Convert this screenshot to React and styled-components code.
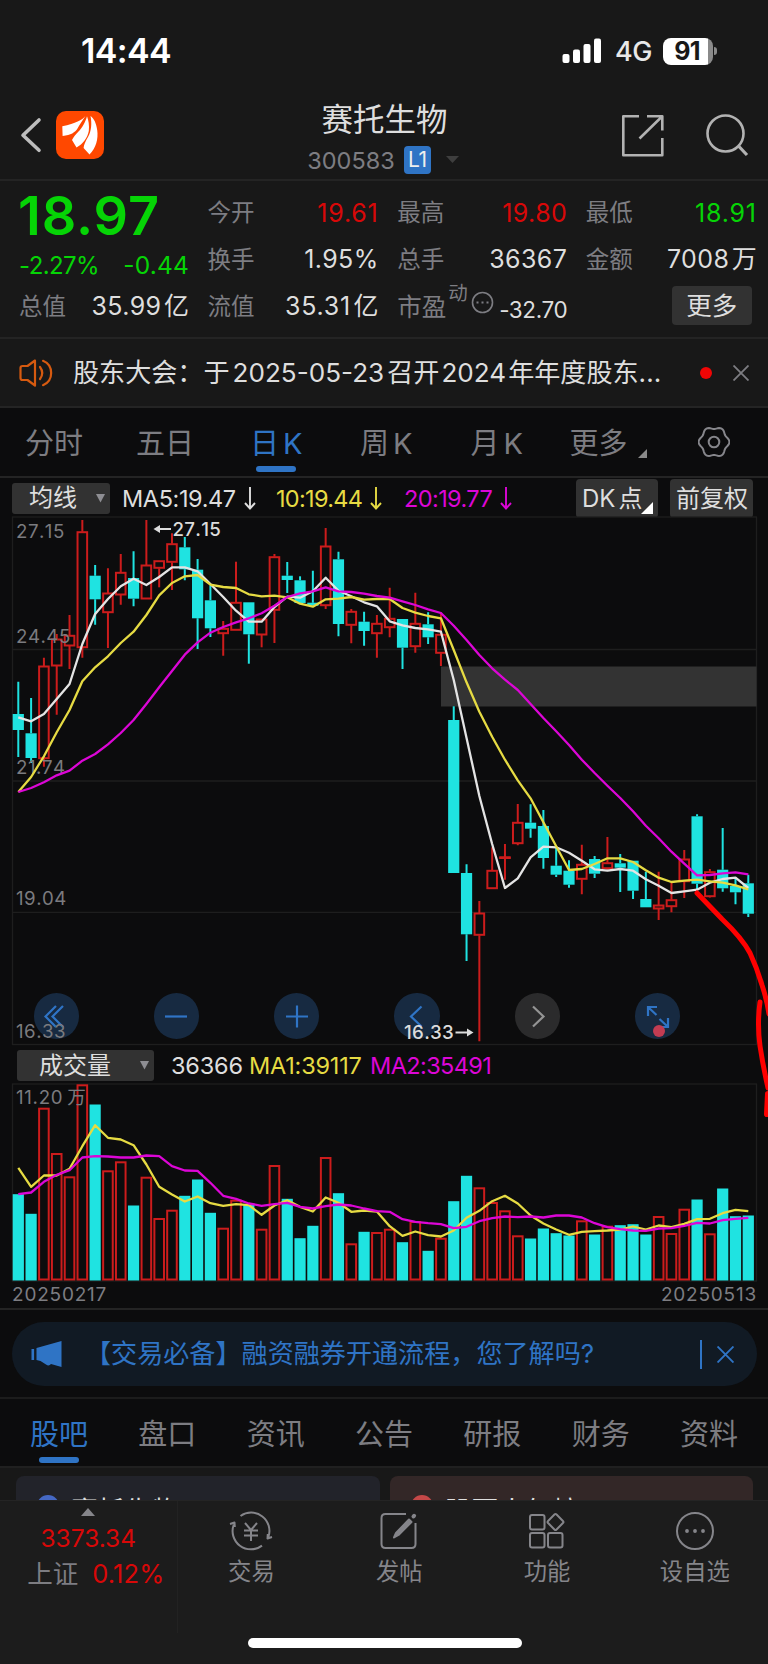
import React from 'react'
import styled, { createGlobalStyle, ThemeProvider } from 'styled-components'


const theme = {
    panel: '#181818',
    dark: '#0c0c0d',
    footer: '#1c1c1c',
    border: '#242424',
    grid: '#1e1e1e',
    button: '#323232',
    text: '#dedede',
    muted: '#7d7d82',
    blue: '#2f74c5',
    red: '#d80808',
    green: '#06d406',
    candleRed: '#cc1c1c',
    cyan: '#1fe3e1',
    yellow: '#e6db43',
    magenta: '#dc06d6',
}

const GlobalStyle = createGlobalStyle`
* {
    box-sizing: border-box;
}

body {
    margin: 0;
    background-color: #181818;
    font-family: Inter, "Noto Sans CJK SC", sans-serif;
    line-height: 1;
}

svg {
    display: block;
    flex: none;
}
`

const StyledApp = styled.div`
position: relative;
width: 768px;
height: 1664px;
overflow: hidden;
display: flex;
flex-direction: column;
color: ${({ theme }) => theme.text};
background-color: ${({ theme }) => theme.panel};
`
const StyledText = styled.span`
font-size: ${({ size }) => size}px;
letter-spacing: ${({ spacing }) => spacing || 0}px;
font-weight: ${({ weight }) => weight || 400};
color: ${({ theme, tone }) => theme[tone || 'text']};
white-space: nowrap;
line-height: 1;
`
const StyledGap = styled.span`
margin: 0 ${({ size }) => size || 0}px;
`
const StyledUnit = styled.span`
margin-left: ${({ size }) => size || 4}px;
letter-spacing: 0;
`


// === Status bar ===

const StyledStatusBar = styled.div`
height: 90px;
padding: 13px 51px 0 81px;
display: flex;
align-items: center;
`
const StyledStatusTime = styled.div`
flex: 1;
font-size: 34px;
font-weight: 600;
letter-spacing: -0.6px;
color: #fff;
`
const StyledNetwork = styled.div`
margin: 1px 11px 0 13px;
font-size: 27px;
font-weight: 500;
letter-spacing: -0.4px;
color: #e8e8e8;
`
const StyledBattery = styled.div`
width: 50px;
height: 27px;
border-radius: 8px;
background: linear-gradient(90deg, #fff 90%, #8a8a8a 90%);
font-size: 25px;
font-weight: 700;
letter-spacing: -0.8px;
color: #181818;
text-align: center;
line-height: 27px;
padding-right: 2px;
`
const StyledBatteryTip = styled.div`
width: 3px;
height: 8px;
margin-left: 1px;
border-radius: 0 4px 4px 0;
background-color: #8a8a8a;
`
const StatusBar = () => (
    <StyledStatusBar>
        <StyledStatusTime>14:44</StyledStatusTime>
        <svg width="40" height="26" viewBox="0 0 40 26" fill="#fff">
            <rect x="0.5" y="16" width="7" height="9" rx="2" />
            <rect x="11" y="11.5" width="7" height="13.5" rx="2" />
            <rect x="21.5" y="6" width="7" height="19" rx="2" />
            <rect x="32" y="0.5" width="7" height="24.5" rx="2" />
        </svg>
        <StyledNetwork>4G</StyledNetwork>
        <StyledBattery>91</StyledBattery>
        <StyledBatteryTip />
    </StyledStatusBar>
)


// === Header ===

const StyledHeader = styled.div`
height: 91px;
border-bottom: 2px solid ${({ theme }) => theme.border};
padding: 0 19px 0 20px;
display: grid;
grid-template-columns: 200px 1fr 200px;
`
const StyledHeaderSide = styled.div`
display: flex;
gap: ${({ gap }) => gap}px;
padding-top: ${({ top }) => top}px;
justify-content: ${({ end }) => end ? 'flex-end' : 'flex-start'};
align-items: flex-start;
`
const StyledHeaderTitle = styled.div`
display: flex;
flex-direction: column;
align-items: center;
padding-top: 14px;
gap: 11px;
`
const StyledHeaderCode = styled.div`
display: flex;
align-items: center;
height: 28px;
padding-right: 3px;
`
const StyledLevelBadge = styled.span`
width: 27px;
height: 28px;
margin: 0 15px 0 9px;
border-radius: 4px;
background-color: #2f74c5;
color: #eee;
font-size: 21px;
line-height: 28px;
text-align: center;
letter-spacing: -0.5px;
`
const Header = () => (
    <StyledHeader>
        <StyledHeaderSide gap={13} top={21}>
            <svg width="23" height="48" viewBox="0 0 23 48" fill="none" stroke="#bdbdbd" strokeWidth="3.600" strokeLinecap="round" strokeLinejoin="round">
                <path d="M19 9L3 24.300l16 15" />
            </svg>
            <svg width="48" height="48" viewBox="0 0 48 48">
                <rect width="48" height="48" rx="10" fill="#ff4800" />
                <path fill="#fff" d="M29.500 5C26 9 20 12.500 6.300 15.200L6.600 25C15 24 19 21.500 21.500 17.500C23.500 13.500 27 9 29.500 5Z" />
                <path fill="#fff" d="M31 5.200C29.500 11 26 17 22.500 20.500C20 23 17.500 26 16 29L20.500 36.500C27 33 31.500 27 32.800 20C33.500 14.500 32.500 9 31 5.200Z" />
                <path fill="#fff" d="M34.500 5C36 12 35.500 20 32 26C29.500 30 27.800 34 27.600 37L33.500 43.500C40 37 42.500 28 41.200 19C40.200 12 38 7.500 34.500 5Z" />
            </svg>
        </StyledHeaderSide>
        <StyledHeaderTitle>
            <StyledText size={31.5}>赛托生物</StyledText>
            <StyledHeaderCode>
                <StyledText size={23.5} tone="muted">300583</StyledText>
                <StyledLevelBadge>L1</StyledLevelBadge>
                <svg width="13" height="8" viewBox="0 0 13 8"><path d="M0 0h13l-6.500 7z" fill="#3e3e3e" /></svg>
            </StyledHeaderCode>
        </StyledHeaderTitle>
        <StyledHeaderSide gap={41} top={24} end>
            <svg width="44" height="44" viewBox="0 0 44 44" fill="none" stroke="#b2b2b2" strokeWidth="2.600" strokeLinejoin="round">
                <path d="M18 2.300H2.300V41.300H41.300V24M26 2.300H41.300V16.500M41 2.500L18.500 24.500" />
            </svg>
            <svg width="43" height="44" viewBox="0 0 43 44" fill="none" stroke="#b2b2b2" strokeWidth="2.600">
                <circle cx="19.500" cy="19.500" r="18" />
                <path d="M32.500 32l8.500 9" strokeWidth="3.200" />
            </svg>
        </StyledHeaderSide>
    </StyledHeader>
)


// === Quote ===

const StyledQuote = styled.div`
height: 158px;
border-bottom: 2px solid ${({ theme }) => theme.border};
padding: 9px 11px 0 19px;
display: grid;
grid-template-columns: 170px 171px 170px 171px;
column-gap: 18.6px;
`
const StyledQuoteColumn = styled.div`
display: flex;
flex-direction: column;
`
const StyledQuoteRow = styled.div`
height: 46.8px;
display: flex;
justify-content: space-between;
align-items: center;
`
const StyledPrice = styled.div`
height: 51px;
margin-left: -1px;
font-size: 54px;
font-weight: 600;
letter-spacing: 0.9px;
line-height: 51px;
color: ${({ theme }) => theme.green};
`
const StyledPriceChange = styled.div`
height: 42.6px;
padding-top: 7px;
display: flex;
align-items: center;
justify-content: space-between;
`
const StyledPeLabel = styled.div`
display: flex;
align-items: center;
margin-right: auto;
`
const StyledPeBadge = styled.span`
margin: -26px 3px 0 2px;
font-size: 19.5px;
color: ${({ theme }) => theme.muted};
`
const StyledPeIcon = styled.div`
margin-top: -8px;
`
const StyledPeValue = styled.div`
padding-top: 6px;
`
const StyledMoreButton = styled.div`
width: 80px;
height: 39px;
margin: -3px 5px 0 auto;
border-radius: 4px;
background-color: ${({ theme }) => theme.button};
display: flex;
align-items: center;
justify-content: center;
`
const QuoteItem = ({ label, value, unit, tone, spacing }) => (
    <StyledQuoteRow>
        <StyledText size={23.5} tone="muted">{label}</StyledText>
        <StyledText size={25} tone={tone} spacing={spacing || 0.4}>
            {value}
            {unit && <StyledUnit size={2.5}>{unit}</StyledUnit>}
        </StyledText>
    </StyledQuoteRow>
)
const Quote = () => (
    <StyledQuote>
        <StyledQuoteColumn>
            <StyledPrice>18.97</StyledPrice>
            <StyledPriceChange>
                <StyledText size={24} spacing={-0.6} tone="green">-2.27%</StyledText>
                <StyledText size={24.5} spacing={0.2} tone="green">-0.44</StyledText>
            </StyledPriceChange>
            <QuoteItem label="总值" value="35.99" unit="亿" />
        </StyledQuoteColumn>
        <StyledQuoteColumn>
            <QuoteItem label="今开" value="19.61" tone="red" spacing={0.8} />
            <QuoteItem label="换手" value="1.95%" />
            <QuoteItem label="流值" value="35.31" unit="亿" spacing={0.8} />
        </StyledQuoteColumn>
        <StyledQuoteColumn>
            <QuoteItem label="最高" value="19.80" tone="red" spacing={0.4} />
            <QuoteItem label="总手" value="36367" />
            <StyledQuoteRow>
                <StyledPeLabel>
                    <StyledText size={24.5} tone="muted">市盈</StyledText>
                    <StyledPeBadge>动</StyledPeBadge>
                    <StyledPeIcon>
                        <svg width="23" height="23" viewBox="0 0 23 23" fill="none" stroke="#7d7d82" strokeWidth="1.600">
                            <circle cx="11.500" cy="11.500" r="10" />
                            <path d="M5.500 11.500h2M10.500 11.500h2M15.500 11.500h2" strokeWidth="2" />
                        </svg>
                    </StyledPeIcon>
                </StyledPeLabel>
                <StyledPeValue><StyledText size={22.5} spacing={-0.4}>-32.70</StyledText></StyledPeValue>
            </StyledQuoteRow>
        </StyledQuoteColumn>
        <StyledQuoteColumn>
            <QuoteItem label="最低" value="18.91" tone="green" spacing={0.8} />
            <QuoteItem label="金额" value="7008" unit="万" />
            <StyledQuoteRow>
                <StyledMoreButton><StyledText size={25.5}>更多</StyledText></StyledMoreButton>
            </StyledQuoteRow>
        </StyledQuoteColumn>
    </StyledQuote>
)


// === Notice ===

const StyledNotice = styled.div`
height: 70px;
border-bottom: 2px solid ${({ theme }) => theme.border};
padding: 1px 19px 0 19px;
display: flex;
align-items: center;
`
const StyledNoticeText = styled.div`
flex: 1;
margin-left: 20px;
font-size: 26.1px;
white-space: nowrap;
`
const StyledNoticeDot = styled.div`
width: 12px;
height: 12px;
margin-right: 21px;
border-radius: 50%;
background-color: #f00505;
`
const CloseIcon = ({ color, size }) => (
    <svg width={size} height={size} viewBox="0 0 16 16" fill="none" stroke={color} strokeWidth="1.800">
        <path d="M0.500 0.500l15 15M15.500 0.500l-15 15" />
    </svg>
)
const Notice = () => (
    <StyledNotice>
        <svg width="34" height="28" viewBox="0 0 34 28" fill="none" stroke="#d65a10" strokeWidth="2.200" strokeLinejoin="round" strokeLinecap="round">
            <path d="M16 1.500L8.500 7H3.500Q1.500 7 1.500 9v10Q1.500 21 3.500 21H8.500L16 26.500Z" />
            <path d="M21 8q4.500 6 0 12M24 1.800a13.200 13.200 0 0 1 0 24.400" />
        </svg>
        <StyledNoticeText>
            股东大会：于<StyledGap size={3}>2025-05-23</StyledGap>召开<StyledGap size={2}>2024</StyledGap>年年度股东...
        </StyledNoticeText>
        <StyledNoticeDot />
        <CloseIcon color="#7d7d82" size={16} />
    </StyledNotice>
)


// === Period tabs ===

const StyledPeriodTabs = styled.div`
height: 70px;
border-bottom: 2px solid ${({ theme }) => theme.border};
background-color: ${({ theme }) => theme.dark};
padding-left: 25px;
display: grid;
grid-template-columns: 111px 114px 110px 110.5px 99px 128.5px 32px;
justify-items: start;
align-items: center;
`
const StyledTab = styled.div`
height: 68px;
padding-top: 21px;
display: flex;
flex-direction: column;
align-items: center;
gap: 8px;
font-size: 29px;
white-space: nowrap;
color: ${({ theme, active }) => active ? theme.blue : theme.muted};

&::after {
    content: '';
    width: 40px;
    height: 6px;
    border-radius: 3px;
    background-color: ${({ theme, active }) => active ? theme.blue : 'transparent'};
}
`
const StyledTabMore = styled.div`
display: flex;
align-items: flex-end;
gap: 10px;
`
// outline with six soft lobes
const gearPoints = Array.from({ length: 72 }, (_, index) => {
    const angle = index * Math.PI / 36
    const radius = 14.2 + Math.cos(angle * 6) * 1.2
    return `${(16 + radius * Math.cos(angle)).toFixed(2)},${(16 + radius * Math.sin(angle)).toFixed(2)}`
}).join(' ')
const PeriodTabs = () => (
    <StyledPeriodTabs>
        <StyledTab>分时</StyledTab>
        <StyledTab>五日</StyledTab>
        <StyledTab active><span>日<StyledUnit>K</StyledUnit></span></StyledTab>
        <StyledTab><span>周<StyledUnit>K</StyledUnit></span></StyledTab>
        <StyledTab><span>月<StyledUnit>K</StyledUnit></span></StyledTab>
        <StyledTab>
            <StyledTabMore>
                更多
                <svg width="9" height="9" viewBox="0 0 9 9"><path d="M9 0v9H0z" fill="#8a8a8a" /></svg>
            </StyledTabMore>
        </StyledTab>
        <svg width="32" height="32" viewBox="0 0 32 32" fill="none" stroke="#86868b" strokeWidth="2" strokeLinejoin="round">
            <polygon points={gearPoints} />
            <circle cx="16" cy="16" r="5.300" />
        </svg>
    </StyledPeriodTabs>
)


// === Chart data ===

// page x of the first column and the distance between two columns
const FIRST_X = 18.3
const STEP = 12.807
const columnX = (index) => FIRST_X + index * STEP

// [rising, high, body top, body bottom, low]
const candles = [
    [0, 682.7, 715, 731, 758], [0, 699, 734.3, 759, 764], [1, 658.7, 667, 759.7, 767.7], [1, 635, 640, 667, 715.7],
    [1, 616, 636.3, 647, 670], [1, 521, 532.7, 648.7, 658.7], [0, 566, 576.7, 600.3, 625.7], [1, 569.3, 594, 613.7, 649],
    [1, 555, 573.3, 596, 605.7], [0, 552.3, 579, 599.7, 607.3], [1, 521, 566, 600, 600], [1, 561.7, 561.7, 569.3, 588.3],
    [1, 534.3, 544.7, 563.3, 591], [0, 538, 548.3, 570.3, 581.3], [0, 560, 570.7, 619.3, 650], [0, 586.3, 601.3, 629.3, 638],
    [1, 622, 629.3, 634.7, 656.7], [1, 562.7, 603.3, 631.3, 631.3], [0, 603.3, 603.3, 635.3, 664.7], [1, 620, 620, 636, 648.3],
    [1, 555, 557.7, 611.3, 644], [0, 563, 576.7, 581, 594], [0, 577.3, 581.3, 604, 604], [0, 571.7, 603.7, 606.7, 608],
    [1, 529, 547, 606.7, 610], [0, 552.7, 560.3, 625, 637.3], [1, 610, 612.3, 626.3, 644.3], [0, 612.7, 622.7, 632, 646.7],
    [1, 616, 624.3, 634.7, 658.7], [1, 588.7, 619.3, 628.7, 638.3], [0, 620, 620, 648.7, 670], [1, 593.7, 624.3, 647.7, 653.7],
    [0, 613.3, 625.3, 638.3, 645], [1, 613.3, 635.3, 654.3, 667], [0, 707.3, 721, 874, 874], [0, 865.3, 874, 935.3, 962],
    [1, 902, 914, 936.3, 1042.3], [1, 848.3, 871.3, 889.7, 889.7], [1, 845, 858, 859, 880.7], [1, 805, 823.3, 844.7, 846.3],
    [0, 805.3, 823.7, 829.7, 838.7], [0, 811, 827, 859, 869.7], [0, 848.3, 866.7, 875.7, 878], [0, 861.3, 871.7, 885.7, 888.7],
    [1, 845.7, 865.3, 880.3, 895.3], [0, 857, 860, 874.7, 879], [1, 838, 863.7, 869.7, 871], [0, 855, 864.3, 868.7, 893],
    [0, 861.7, 861.7, 891.7, 900], [0, 872.7, 900, 908.3, 908.3], [1, 872.7, 906, 910, 921], [1, 883.3, 900.7, 907.7, 913.3],
    [1, 851, 860, 882.7, 899], [0, 815.3, 817.3, 884.7, 890], [1, 870, 872.7, 897.7, 898.5], [0, 829, 870.7, 889.3, 892.7],
    [0, 878.3, 887, 893.3, 905.3], [0, 875.7, 884.3, 914.7, 918],
]
const ma5 = [
    718.3, 722.3, 715, 700, 685, 645, 615, 600, 587.3, 579.7, 586, 578, 568.3, 568.3, 572.3, 585, 598, 611.7, 622.7,
    622.7, 608, 597.7, 598.7, 592.3, 578.7, 591.7, 597.3, 603.3, 607.3, 622.3, 626.3, 629, 630.3, 632.7, 681, 739, 797,
    845, 889, 879.3, 858.3, 847.7, 848.3, 853.7, 861.7, 870.3, 871.7, 870, 871.7, 880.3, 886.7, 894, 892.3, 890.7,
    883.7, 880, 878.7, 889,
]
const ma10 = [
    793, 778, 757.3, 733.3, 711, 682.3, 668.3, 657.3, 644, 632.7, 616, 596.3, 584, 577.3, 576, 585.7, 588, 589, 595.3,
    597.3, 596.7, 598.3, 604.7, 607.7, 600.3, 599.7, 598, 600.7, 600, 600, 609, 613.7, 617, 619.3, 651, 683.3, 712.7,
    737.7, 760.7, 781.3, 799.3, 823.3, 847.3, 871, 870, 865, 859.3, 859.3, 863, 871.3, 878.7, 883, 881.7, 880.7, 882.3,
    883.7, 886.3, 890.3,
]
const ma20 = [
    793, 789, 783.3, 776.3, 771.7, 761.7, 755, 745.3, 734, 721, 705, 688.3, 672, 655.7, 643.3, 633.7, 628, 623.3, 619.3,
    614.3, 606.7, 598, 594.3, 592.3, 588.3, 592.3, 593, 594.7, 597, 598.7, 602.3, 606, 610.3, 614, 626.7, 641, 656,
    669.3, 680.7, 691, 705, 719, 732.3, 746, 760.7, 774, 786.7, 799, 812.3, 826.7, 839.3, 852.7, 864.7, 876.3, 876,
    874.3, 873.3, 875.3,
]
// tops of the volume bars, negative values are falling days
const volumes = [
    -1194.7, -1214.3, 1108.7, 1154, 1177.3, 1085.3, -1105, 1171.3, 1162.3, -1206, 1177.7, 1219, 1210.7, -1196.3, -1180,
    -1213.3, 1228.7, 1200.7, -1205.3, 1229.7, 1166, -1199.3, -1238.7, -1226.3, 1158, -1193.7, 1244.3, -1232.3, 1233,
    1229.7, -1242.7, 1222, -1251.3, 1238.7, -1201.7, -1176.3, 1188.3, 1203, 1211.3, 1236.3, -1239, -1229, -1233.7,
    -1236, 1221.3, -1235, 1226.7, -1225.7, -1224.7, -1235, 1217, 1234, 1209.7, -1200, 1234.3, -1189, -1216.7, -1216,
]
const volumeMa1 = [
    1168.3, 1187.3, 1176, 1176, 1169.3, 1146.7, 1125.7, 1138.3, 1140, 1145.7, 1165, 1187.3, 1195, 1202, 1197, 1203.7,
    1206.3, 1204.7, 1205.7, 1215.3, 1206, 1200.7, 1207.3, 1212, 1198, 1203.3, 1212.3, 1211, 1212, 1226.7, 1236.3, 1232,
    1235.7, 1237, 1231, 1218.3, 1211.3, 1201.7, 1196.3, 1204, 1216, 1224, 1230, 1235.3, 1232.3, 1231.7, 1231, 1230,
    1227, 1230, 1226, 1227.7, 1224.3, 1219.7, 1219.3, 1213.7, 1210.3, 1211.7,
]
const volumeMa2 = [
    1194.7, 1193, 1182.3, 1175.3, 1170.7, 1158, 1156.7, 1157, 1158, 1158, 1156, 1156.7, 1166.7, 1171, 1171.3, 1183.3,
    1196.3, 1199.3, 1204, 1206.3, 1204.7, 1203.3, 1207.3, 1209, 1206.7, 1205, 1206, 1209, 1211.7, 1212.3, 1219.7,
    1222.3, 1223.7, 1224.7, 1228.7, 1227.3, 1221.7, 1218.7, 1217, 1217.7, 1217, 1218, 1216, 1216, 1218, 1223.7, 1227.7,
    1229.7, 1231, 1231.3, 1229, 1228.7, 1226.3, 1223.3, 1224, 1220.7, 1219.3, 1218.3,
]


// === Price chart ===

const StyledToolbar = styled.div`
height: ${({ height }) => height}px;
background-color: ${({ theme }) => theme.dark};
padding: ${({ top }) => top || 0}px 15px 0 ${({ left }) => left}px;
display: flex;
align-items: center;
`
const StyledSelect = styled.div`
width: ${({ width }) => width}px;
height: 31px;
margin-right: ${({ right }) => right}px;
padding: 0 5px 0 ${({ left }) => left}px;
border-radius: 3px;
background-color: ${({ theme }) => theme.button};
display: flex;
align-items: center;
justify-content: space-between;
font-size: 24px;
`
const StyledToolButton = styled.div`
position: relative;
width: ${({ width }) => width}px;
height: 39px;
margin-left: 12px;
border-radius: 4px;
background-color: ${({ theme }) => theme.button};
font-size: 24px;
line-height: 39px;
white-space: nowrap;
padding-left: 6px;
`
const StyledCorner = styled.svg`
position: absolute;
right: 5px;
bottom: 4px;
`
const StyledMaValue = styled.div`
width: ${({ width }) => width}px;
display: flex;
align-items: center;
gap: 8px;
font-size: 23.5px;
letter-spacing: ${({ spacing }) => spacing || 0}px;
white-space: nowrap;
color: ${({ theme, tone }) => theme[tone]};
`
const StyledSpacer = styled.div`
flex: 1;
`
const DropIcon = () => (
    <svg width="9" height="9" viewBox="0 0 9 9"><path d="M0 0h9L4.500 8.500z" fill="#8e8e93" /></svg>
)
const DownArrow = () => (
    <svg width="12" height="23" viewBox="0 0 12 23" fill="none" stroke="currentColor" strokeWidth="1.900">
        <path d="M6 0v21M1 16l5 5.500L11 16" />
    </svg>
)
const MaToolbar = () => (
    <StyledToolbar height={39} left={12} top={1}>
        <StyledSelect width={98} left={17} right={12}>均线<DropIcon /></StyledSelect>
        <StyledMaValue width={154} tone="text" spacing={-0.4}>MA5:19.47<DownArrow /></StyledMaValue>
        <StyledMaValue width={128} tone="yellow" spacing={-0.7}>10:19.44<DownArrow /></StyledMaValue>
        <StyledMaValue width={110} tone="magenta" spacing={-0.6}>20:19.77<DownArrow /></StyledMaValue>
        <StyledSpacer />
        <StyledToolButton width={82}>
            DK<StyledUnit size={3}>点</StyledUnit>
            <StyledCorner width="12" height="12" viewBox="0 0 12 12"><path d="M12 0v12H0z" fill="#fff" /></StyledCorner>
        </StyledToolButton>
        <StyledToolButton width={83}>前复权</StyledToolButton>
    </StyledToolbar>
)

const StyledChart = styled.div`
position: relative;
height: ${({ height }) => height}px;
background-color: ${({ theme }) => theme.dark};
padding: 0 12px;
`
const StyledPlot = styled.svg`
position: relative;
overflow: visible;
font-family: Inter, "Noto Sans CJK SC", sans-serif;
font-kerning: none;
`
const StyledControls = styled.div`
position: absolute;
left: 33.5px;
top: 476px;
display: flex;
gap: 75px;
`
const StyledControl = styled.div`
position: relative;
width: 45.3px;
height: 45.3px;
border-radius: 50%;
background-color: ${({ disabled }) => disabled ? '#2b2b2c' : '#172a41'};
display: flex;
align-items: center;
justify-content: center;
`
const StyledControlDot = styled.span`
position: absolute;
left: 18px;
bottom: 2px;
width: 12px;
height: 12px;
border-radius: 50%;
background-color: #c23c52;
`
const Line = ({ values, color }) => (
    <polyline
        points={values.map((value, index) => `${columnX(index)},${value}`).join(' ')}
        fill="none"
        stroke={color}
        strokeWidth="2.300"
        strokeLinejoin="round"
    />
)
const Candle = ({ index, data }) => {
    const [rising, high, top, bottom, low] = data
    const x = columnX(index)
    const color = rising ? theme.candleRed : theme.cyan
    return (
        <g stroke={color} strokeWidth="2">
            <path d={`M${x} ${high}V${top}M${x} ${bottom}V${low}`} />
            {rising
                ? <rect x={x - 4.8} y={top + 0.5} width="9.600" height={Math.max(bottom - top - 1, 0.5)} fill="none" />
                : <rect x={x - 5.6} y={top} width="11.200" height={bottom - top} fill={color} stroke="none" />
            }
        </g>
    )
}
const controls = [
    'M15 4L4.500 14.500L15 25M22 4L11.500 14.500L22 25',
    'M4 14.500h22',
    'M4 14.500h22M15 3.500v22',
    'M19.500 4.500L9 14.500l10.500 10',
    'M11 4.500L21.500 14.500L11 24.500',
    'M5 14V5h9M5 5l8.500 8M25 16v9h-9M25 25l-8.500-8',
]
const axisLabels = [['27.15', 539.3], ['24.45', 644], ['21.74', 775], ['19.04', 905.5], ['16.33', 1039]]

const PriceChart = () => (
    <StyledChart height={528}>
        <StyledControls>
            {controls.map((path, index) => (
                <StyledControl key={index} disabled={index === 4}>
                    <svg width="30" height="29" viewBox="0 0 30 29" fill="none" stroke={index === 4 ? '#949494' : theme.blue} strokeWidth="2.200">
                        <path d={path} />
                    </svg>
                    {index === 5 && <StyledControlDot />}
                </StyledControl>
            ))}
        </StyledControls>
        <StyledPlot width="744" height="528" viewBox="12 518 744 528">
            <g stroke={theme.grid} strokeWidth="1.300" fill="none">
                <rect x="12.500" y="518" width="744" height="527.500" />
                <path d="M12 650.500H756M12 782H756M12 913.300H756" />
            </g>
            <rect x="441" y="667.500" width="315.500" height="40" fill="#333" />
            {candles.map((data, index) => <Candle key={index} index={index} data={data} />)}
            <g fontSize="18.700" letterSpacing="0.500" fill="#7b7b7f">
                {axisLabels.map(([label, y]) => <text key={label} x="16" y={y}>{label}</text>)}
            </g>
            {/* open and close are equal here, the body is a single dash */}
            <path d="M499.500 858.500h11" stroke={theme.candleRed} strokeWidth="2" />
            <Line values={ma5} color="#e4e4e4" />
            <Line values={ma10} color={theme.yellow} />
            <Line values={ma20} color={theme.magenta} />
            <g fontSize="18.700" fontWeight="500" letterSpacing="0.300" fill="#dcdcdc">
                <text x="172.500" y="537">27.15</text>
                <text x="404" y="1040">16.33</text>
                <path d="M153.500 530l6.500-4v3h11v2h-11v3zM473.500 1033.500l-6.500-4v3H455.500v2h11.500v3z" />
            </g>
        </StyledPlot>
    </StyledChart>
)


// === Volume chart ===

const VolumeToolbar = () => (
    <StyledToolbar height={38.5} left={17} top={2}>
        <StyledSelect width={137} left={22} right={17}>成交量<DropIcon /></StyledSelect>
        <StyledMaValue width={78} tone="text" spacing={-0.2}>36366</StyledMaValue>
        <StyledMaValue width={121} tone="yellow" spacing={-0.2}>MA1:39117</StyledMaValue>
        <StyledMaValue width={130} tone="magenta" spacing={-0.6}>MA2:35491</StyledMaValue>
    </StyledToolbar>
)
const VolumeBar = ({ index, value }) => {
    const top = Math.abs(value)
    const x = columnX(index)
    if (value < 0) return <rect x={x - 5.6} y={top} width="11.200" height={1281 - top} fill={theme.cyan} />
    return <rect x={x - 4.8} y={top + 0.5} width="9.600" height={1279.5 - top} fill="none" stroke={theme.candleRed} strokeWidth="2" />
}
const VolumeChart = () => (
    <StyledChart height={196.5}>
        <StyledPlot width="744" height="197" viewBox="12 1084.500 744 197">
            <rect x="12.500" y="1084.500" width="744" height="197" fill="none" stroke={theme.grid} strokeWidth="1.300" />
            {volumes.map((value, index) => <VolumeBar key={index} index={index} value={value} />)}
            <text x="16" y="1104" fontSize="18.700" letterSpacing="0.700" fill="#7b7b7f">11.20<tspan dx="4">万</tspan></text>
            <Line values={volumeMa1} color={theme.yellow} />
            <Line values={volumeMa2} color={theme.magenta} />
        </StyledPlot>
    </StyledChart>
)
const StyledDates = styled.div`
height: 30px;
background-color: ${({ theme }) => theme.dark};
border-bottom: 2px solid ${({ theme }) => theme.border};
padding: 0 11px 0 12px;
display: flex;
align-items: center;
justify-content: space-between;
font-size: 19px;
letter-spacing: 0.8px;
color: ${({ theme }) => theme.muted};
`


// === Banner ===

const StyledBannerSection = styled.div`
height: 89px;
border-bottom: 2px solid #1c1c1c;
background-color: ${({ theme }) => theme.dark};
padding: 12px 11px 0 12px;
`
const StyledBanner = styled.div`
height: 64px;
border-radius: 32px;
background-color: #111a24;
padding: 0 23px 0 19px;
display: flex;
align-items: center;
color: ${({ theme }) => theme.blue};
`
const StyledBannerText = styled.div`
flex: 1;
margin-left: 22px;
font-size: 26.1px;
white-space: nowrap;
`
const StyledBannerDivider = styled.div`
width: 2px;
height: 29px;
margin-right: 15px;
background-color: ${({ theme }) => theme.blue};
`
const Banner = () => (
    <StyledBannerSection>
        <StyledBanner>
            <svg width="32" height="28" viewBox="0 0 32 28" fill="#2f74c5">
                <rect x="0.500" y="9" width="2.600" height="11" />
                <path d="M5.500 8L30.500 1V27L20 24Q18 26.500 15 24.500L9.500 21L5.500 20Z" />
            </svg>
            <StyledBannerText>【交易必备】融资融券开通流程，您了解吗?</StyledBannerText>
            <StyledBannerDivider />
            <CloseIcon color="#2f74c5" size={17} />
        </StyledBanner>
    </StyledBannerSection>
)


// === Content tabs ===

const StyledContentTabs = styled.div`
height: 69px;
border-bottom: 2px solid #202020;
background-color: ${({ theme }) => theme.dark};
padding: 0 30px 0 30px;
display: flex;
justify-content: space-between;
`
const contentTabs = ['股吧', '盘口', '资讯', '公告', '研报', '财务', '资料']
const ContentTabs = () => (
    <StyledContentTabs>
        {contentTabs.map((text, index) => <StyledTab key={text} active={index === 0}>{text}</StyledTab>)}
    </StyledContentTabs>
)

const StyledCards = styled.div`
height: 32px;
padding: 8px 15px 0 16px;
overflow: hidden;
display: grid;
grid-template-columns: 1fr 1fr;
column-gap: 10px;
`
const StyledCard = styled.div`
height: 70px;
border-radius: 8px 8px 0 0;
padding: 19px 0 0 21px;
display: flex;
align-items: flex-start;
gap: 12px;
font-size: 27px;
line-height: 34px;
background-color: ${({ background }) => background};
`
const StyledCardIcon = styled.span`
width: 22px;
height: 22px;
border-radius: 50%;
background-color: ${({ color }) => color};
`
const Cards = () => (
    <StyledCards>
        <StyledCard background="#22232a"><StyledCardIcon color="#4568c4" />赛托生物</StyledCard>
        <StyledCard background="#332727"><StyledCardIcon color="#c64848" />股票人气榜</StyledCard>
    </StyledCards>
)


// === Footer ===

const StyledFooter = styled.div`
height: 164px;
border-top: 1px solid #242424;
background-color: ${({ theme }) => theme.footer};
display: flex;
flex-direction: column;
align-items: center;
`
const StyledFooterRow = styled.div`
width: 768px;
height: 132px;
display: grid;
grid-template-columns: 177.5px repeat(4, 147.8px);
`
const StyledIndex = styled.div`
height: 132px;
border-right: 1px solid #222;
padding-top: 7px;
display: flex;
flex-direction: column;
align-items: center;
`
const StyledIndexRow = styled.div`
margin-top: 10px;
padding-left: ${({ left }) => left || 0}px;
display: flex;
align-items: center;
gap: 14px;
`
const StyledFooterItem = styled.div`
padding-top: 10px;
display: flex;
flex-direction: column;
align-items: center;
gap: 9px;
font-size: 23.3px;
color: #85858a;
`
const StyledHomeIndicator = styled.div`
width: 274px;
height: 10px;
margin: 5px 0 0 2px;
border-radius: 5px;
background-color: #fff;
`
const FooterIcon = ({ children }) => (
    <svg width="44" height="40" viewBox="0 0 44 40" fill="none" stroke="#85858a" strokeWidth="2" strokeLinejoin="round">
        {children}
    </svg>
)
const Footer = () => (
    <StyledFooter>
        <StyledFooterRow>
            <StyledIndex>
                <svg width="14" height="8" viewBox="0 0 14 8"><path d="M7 0l7 8H0z" fill="#85858a" /></svg>
                <StyledIndexRow>
                    <StyledText size={24.5} tone="red">3373.34</StyledText>
                </StyledIndexRow>
                <StyledIndexRow left={15}>
                    <StyledText size={25.5} tone="muted">上证</StyledText>
                    <StyledText size={25.5} tone="red" spacing={0.1}>0.12%</StyledText>
                </StyledIndexRow>
            </StyledIndex>
            <StyledFooterItem>
                <FooterIcon>
                    <path d="M11.500 5A18.300 18.300 0 0 1 39.200 26.500M43 26l-4.500 1.500l.3-4.500M33 34.600A18.300 18.300 0 0 1 4.800 13.500M1 13l4.500-1.500l.3 4.500" />
                    <path d="M16 12l6 7l6-7M22 19v11M15 19.500h14M15 24.500h14" />
                </FooterIcon>
                交易
            </StyledFooterItem>
            <StyledFooterItem>
                <FooterIcon>
                    <path d="M29 3H8.500Q4.500 3 4.500 7V33Q4.500 37 8.500 37H34.500Q38.500 37 38.500 33V12" />
                    <path d="M17 26.500L19 22L32 8.500L34.500 11L21.500 24Z" fill="#85858a" />
                    <path d="M36.500 5.500l.6-.7" strokeWidth="4" strokeLinecap="round" />
                </FooterIcon>
                发帖
            </StyledFooterItem>
            <StyledFooterItem>
                <FooterIcon>
                    <rect x="5" y="4" width="14.500" height="14.500" rx="2" />
                    <rect x="5" y="22" width="14.500" height="14.500" rx="2" />
                    <rect x="23" y="22" width="14.500" height="14.500" rx="2" />
                    <rect x="24.500" y="5" width="12" height="12" rx="1.500" transform="rotate(45 30.500 11)" />
                </FooterIcon>
                功能
            </StyledFooterItem>
            <StyledFooterItem>
                <FooterIcon>
                    <circle cx="22" cy="20" r="18" />
                    <path d="M14 20h.01M22 20h.01M30 20h.01" strokeWidth="3.800" strokeLinecap="round" />
                </FooterIcon>
                设自选
            </StyledFooterItem>
        </StyledFooterRow>
        <StyledHomeIndicator />
    </StyledFooter>
)


// hand-drawn mark that runs over the chart to the right edge
const StyledMark = styled.svg`
position: absolute;
left: 0;
top: 0;
pointer-events: none;
`
const Mark = () => (
    <StyledMark width="768" height="1664" viewBox="0 0 768 1664" fill="none" stroke="#ff0000" strokeLinecap="round" strokeLinejoin="round">
        <path d="M697 893L722 919Q742 938 750 953Q757 968 762 985Q767 1000 769 1014" strokeWidth="5" />
        <path d="M760 1002Q757 1024 760 1046Q763 1066 768 1088" strokeWidth="5" />
        <path d="M768 1094L767 1114" strokeWidth="6" />
    </StyledMark>
)

const App = () => (
    <ThemeProvider theme={theme}>
        <GlobalStyle />
        <StyledApp>
            <StatusBar />
            <Header />
            <Quote />
            <Notice />
            <PeriodTabs />
            <MaToolbar />
            <PriceChart />
            <VolumeToolbar />
            <VolumeChart />
            <StyledDates><span>20250217</span><span>20250513</span></StyledDates>
            <Banner />
            <ContentTabs />
            <Cards />
            <Footer />
            <Mark />
        </StyledApp>
    </ThemeProvider>
)

export default App
